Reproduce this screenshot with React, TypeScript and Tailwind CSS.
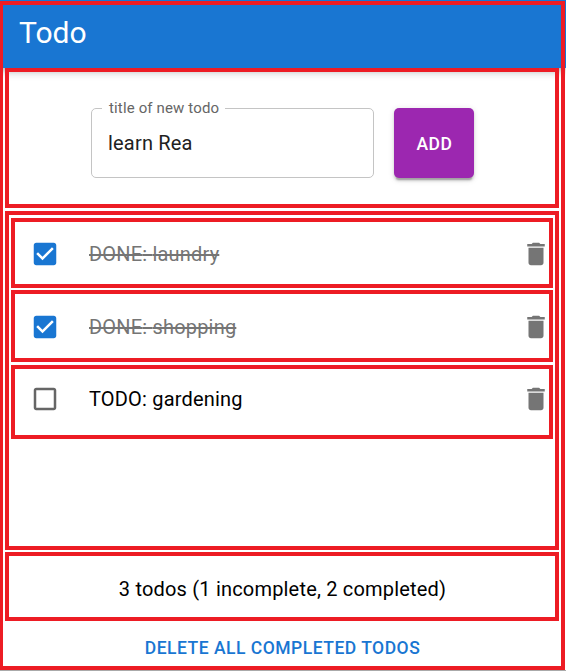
import { useState } from "react";
import type { ReactNode } from "react";

type Todo = { id: number; title: string; done: boolean; box: string };

const initialTodos: Todo[] = [
  { id: 1, title: "laundry", done: true, box: "h-[70px] pt-[2px]" },
  { id: 2, title: "shopping", done: true, box: "mt-0.5 h-[72px] pt-[2px]" },
  { id: 3, title: "gardening", done: false, box: "mt-[3px] h-[74px] pb-[6px]" },
];

function Icon({ children, className }: { children: ReactNode; className: string }) {
  return (
    <svg viewBox="0 0 24 24" fill="currentColor" className={`size-[30px] shrink-0 ${className}`}>
      {children}
    </svg>
  );
}

function TodoItem({ todo, onToggle, onDelete }: { todo: Todo; onToggle: () => void; onDelete: () => void }) {
  return (
    <li className={`flex items-center border-4 border-[#ed1c24] pl-[15px] ${todo.box}`}>
      <button onClick={onToggle} aria-label="toggle">
        {todo.done ? (
          <Icon className="text-[#1976d2]">
            <path d="M19 3H5c-1.11 0-2 .9-2 2v14c0 1.1.89 2 2 2h14c1.11 0 2-.9 2-2V5c0-1.1-.89-2-2-2zm-9 14l-5-5 1.41-1.41L10 14.17l7.59-7.59L19 8l-9 9z" />
          </Icon>
        ) : (
          <Icon className="text-[#666666]">
            <path d="M19 5v14H5V5h14m0-2H5c-1.1 0-2 .9-2 2v14c0 1.1.9 2 2 2h14c1.1 0 2-.9 2-2V5c0-1.1-.9-2-2-2z" />
          </Icon>
        )}
      </button>
      <span
        className={`ml-[29px] flex-1 text-xl leading-[30px] tracking-[0.00938em] ${
          todo.done ? "text-[#757575] line-through" : "text-black"
        }`}
      >
        {todo.done ? "DONE" : "TODO"}: {todo.title}
      </span>
      <button onClick={onDelete} aria-label="delete" className="-mr-[2px]">
        <Icon className="text-[#757575]">
          <path d="M6 19c0 1.1.9 2 2 2h8c1.1 0 2-.9 2-2V7H6v12zM19 4h-3.5l-1-1h-5l-1 1H5v2h14V4z" />
        </Icon>
      </button>
    </li>
  );
}

export default function App() {
  const [todos, setTodos] = useState(initialTodos);
  const [title, setTitle] = useState("learn Rea");
  const completed = todos.filter((t) => t.done).length;

  return (
    <div className="relative flex h-[671px] w-[566px] flex-col overflow-hidden border-b border-[#aaaaaa] bg-white font-[Roboto,sans-serif]">
      <header className="flex h-[68px] shrink-0 items-center bg-[#1976d2] pb-0.5 pl-[19px] text-white shadow-[0_2.5px_5px_-1.25px_rgba(0,0,0,0.2),0_5px_6.25px_rgba(0,0,0,0.14),0_1.25px_12.5px_rgba(0,0,0,0.12)]">
        <h1 className="text-[30px] leading-10">Todo</h1>
      </header>

      <main className="flex flex-1 flex-col pr-[7px] pl-[5px]">
        <form
          onSubmit={(e) => {
            e.preventDefault();
            setTodos([...todos, { id: Date.now(), title, done: false, box: "mt-[3px] h-[72px]" }]);
          }}
          className="flex h-[140px] items-start gap-5 border-4 border-[#ed1c24] pt-[25px] pl-[82px]"
        >
          <fieldset className="mt-px h-[80px] w-[283px] rounded-[5px] border border-[#c4c4c4] pl-2.5">
            <legend className="h-[21px] w-[123px] pl-[7px] text-[15px] leading-[21px] tracking-[0.00938em] whitespace-nowrap text-[#666666]">
              title of new todo
            </legend>
            <input
              value={title}
              onChange={(e) => setTitle(e.target.value)}
              className="h-12 w-full pl-1.5 text-xl tracking-[0.00938em] text-[#212121] outline-none"
            />
          </fieldset>
          <button className="mt-[11px] h-[70px] w-20 rounded-[5px] bg-[#9c27b0] pt-0.5 pl-px text-[17.5px] font-medium tracking-[0.02857em] text-white shadow-[0_3.75px_1.25px_-2.5px_rgba(0,0,0,0.2),0_2.5px_2.5px_rgba(0,0,0,0.14),0_1.25px_6.25px_rgba(0,0,0,0.12)]">
            ADD
          </button>
        </form>

        <ul className="mt-[3px] h-[339px] border-4 border-[#ed1c24] px-0.5 pt-[3px]">
          {todos.map((todo) => (
            <TodoItem
              key={todo.id}
              todo={todo}
              onToggle={() => setTodos(todos.map((t) => (t.id === todo.id ? { ...t, done: !t.done } : t)))}
              onDelete={() => setTodos(todos.filter((t) => t.id !== todo.id))}
            />
          ))}
        </ul>

        <p className="mt-0.5 flex h-[69px] items-center justify-center border-4 border-[#ed1c24] pt-[5px] pl-px text-xl tracking-[0.00938em] text-black">
          {todos.length} todos ({todos.length - completed} incomplete, {completed} completed)
        </p>

        <button
          onClick={() => setTodos(todos.filter((t) => !t.done))}
          className="mt-[11px] h-8 self-center pl-px text-[17.5px] leading-8 font-medium tracking-[0.02857em] text-[#1976d2]"
        >
          DELETE ALL COMPLETED TODOS
        </button>
      </main>

      <div className="pointer-events-none absolute top-px left-0 h-[669px] w-[565px] border-4 border-l-[3px] border-[#ed1c24]" />
    </div>
  );
}
